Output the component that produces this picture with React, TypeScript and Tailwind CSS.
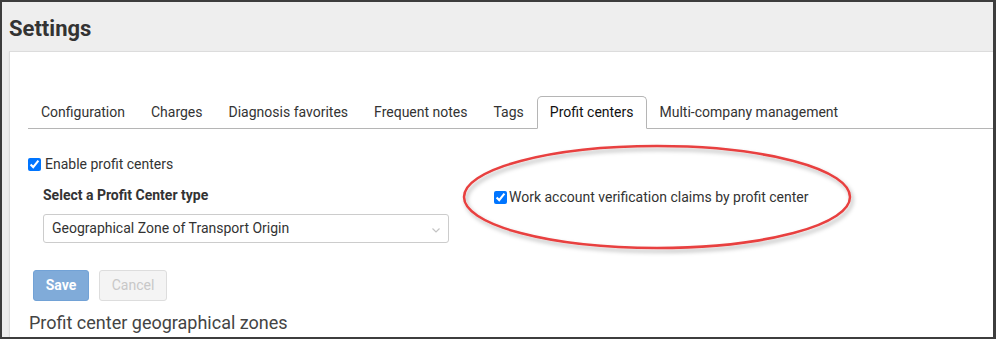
import React from "react";

const font = { fontFamily: "Roboto, 'Liberation Sans', sans-serif" };

function Tab({ label, active }: { label: string; active?: boolean }) {
  return (
    <div
      className={
        active
          ? "h-[33px] -mb-px flex items-center px-[12px] border border-[#b5b5b5] border-b-white bg-white rounded-t-[5px] text-[#111] text-[14px]"
          : "h-[33px] -mb-px flex items-center px-[12px] border border-transparent text-[#333] text-[14px]"
      }
    >
      {label}
    </div>
  );
}

export default function App() {
  return (
    <div style={font} className="w-[996px] h-[339px] bg-[#3d3d3d] pt-[2px] pl-[2px] pr-[3px] pb-[2px]">
      <div className="relative w-full h-full bg-[#eeeeee] overflow-hidden flex flex-col">
        <div className="h-[49px] pl-[7px] pt-[14px] text-[22px] leading-[26px] font-bold text-[#333]">Settings</div>
        <div className="flex-1 ml-[7px] bg-white border-t border-l border-[#dcdcdc] shadow-[0_1px_2px_rgba(0,0,0,0.06)] pl-[18px] pt-[44px]">
          <div className="flex border-b border-[#b5b5b5]">
            <Tab label="Configuration" />
            <Tab label="Charges" />
            <Tab label="Diagnosis favorites" />
            <Tab label="Frequent notes" />
            <Tab label="Tags" />
            <Tab label="Profit centers" active />
            <Tab label="Multi-company management" />
          </div>

          <label className="mt-[25px] flex items-center h-[20px] text-[14px] text-[#333]">
            <input type="checkbox" defaultChecked className="m-0 w-[13px] h-[13px] accent-[#0075ff]" />
            <span className="ml-[4px]">Enable profit centers</span>
          </label>

          <div className="flex mt-[11px]">
            <div className="ml-[15px] w-[406px]">
              <div className="h-[20px] leading-[20px] text-[14px] font-bold text-[#333]">Select a Profit Center type</div>
              <div className="mt-[9px] h-[29px] border border-[#cccccc] rounded-[3px] flex items-center justify-between pl-[8px] pr-[7px] text-[14px] text-[#333]">
                <span>Geographical Zone of Transport Origin</span>
                <svg width="10" height="10" viewBox="0 0 10 10" className="mt-[2px]">
                  <path d="M1.5 3.5 L5 7 L8.5 3.5" fill="none" stroke="#c4c4c4" strokeWidth="1.2" />
                </svg>
              </div>
            </div>
            <label className="ml-[45px] mt-[2px] flex items-center h-[20px] text-[14px] text-[#333] self-start">
              <input type="checkbox" defaultChecked className="m-0 w-[13px] h-[13px] accent-[#0075ff]" />
              <span className="ml-[2px]">Work account verification claims by profit center</span>
            </label>
          </div>

          <div className="flex gap-[10px] ml-[5px] mt-[27px]">
            <button className="h-[31px] w-[56px] rounded-[3px] bg-[#80abd9] border border-[#72a2d6] text-white text-[14px] font-bold">Save</button>
            <button className="h-[31px] w-[68px] rounded-[3px] bg-[#f4f4f4] border border-[#dddddd] text-[#c8c8c8] text-[14px]">Cancel</button>
          </div>

          <div className="mt-[11px] ml-px text-[18px] leading-[22px] text-[#444]">Profit center geographical zones</div>
        </div>

        <svg className="absolute left-0 top-0 pointer-events-none" width="991" height="335" viewBox="0 0 991 335">
          <defs>
            <filter id="sh" x="-10%" y="-20%" width="120%" height="140%">
              <feDropShadow dx="2" dy="3" stdDeviation="2" floodColor="#000" floodOpacity="0.3" />
            </filter>
          </defs>
          <ellipse cx="655" cy="195" rx="193" ry="51" fill="none" stroke="#e8403f" strokeWidth="2.5" filter="url(#sh)" />
        </svg>
      </div>
    </div>
  );
}
